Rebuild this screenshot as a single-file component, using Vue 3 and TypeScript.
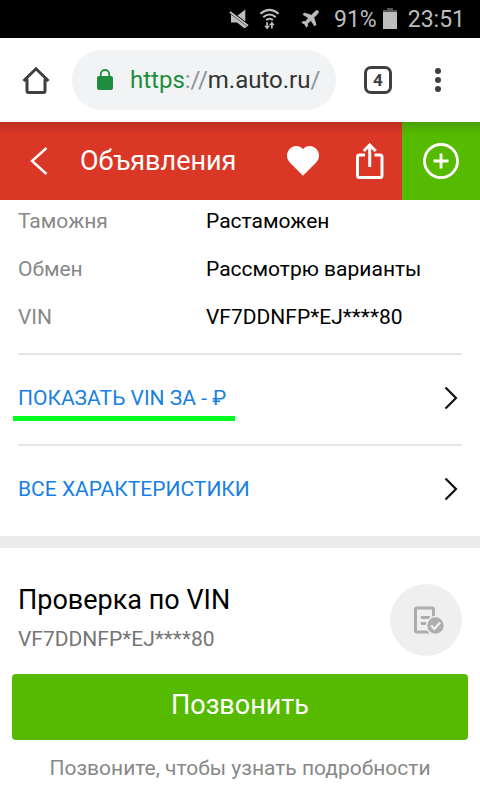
<script setup lang="ts">
interface Spec {
  label: string
  value: string
}

interface MoreLink {
  text: string
  marked: boolean
}

const vin = 'VF7DDNFP*EJ****80'

const specs: Spec[] = [
  { label: 'Таможня', value: 'Растаможен' },
  { label: 'Обмен', value: 'Рассмотрю варианты' },
  { label: 'VIN', value: vin },
]

const links: MoreLink[] = [
  { text: 'ПОКАЗАТЬ VIN ЗА - ₽', marked: true },
  { text: 'ВСЕ ХАРАКТЕРИСТИКИ', marked: false },
]
</script>

<template>
  <div class="screen">
    <div class="status">
      <svg width="20" height="20" viewBox="0 0 20 20" aria-hidden="true">
        <path d="M8.500 6.500L16.300 0.500V12.500z" fill="#bdbdbd" />
        <path d="M1 3L19 16.800" stroke="#bdbdbd" stroke-width="2" />
        <path d="M2 5.500L18 17.500l-1.700 1.500H15L8 13.500H2z" fill="#bdbdbd" />
      </svg>
      <svg class="wifi" width="21" height="22" viewBox="0 0 22 22" aria-hidden="true">
        <g fill="none" stroke="#bdbdbd" stroke-width="2.200">
          <path d="M1.500 5.500Q11 -2.500 20.500 5.500" />
          <path d="M4.500 9Q11 3.500 17.500 9" />
          <path d="M7.500 12.200Q11 9.300 14.500 12.200" />
          <path d="M8.500 14.500v5M13.500 21v-5" stroke-width="1.800" />
        </g>
        <path d="M5.500 18h6l-3 4zM10.500 17.500h6l-3-4z" fill="#bdbdbd" />
      </svg>
      <svg class="plane" width="18" height="18" viewBox="0 0 18 18" aria-hidden="true">
        <path
          d="M17 0.800C18 1.700 17 3.400 16 4.400L12.800 7.600 15 14.600 13.600 16 10 10.400 6.500 13.600 6.600 16 5.400 17.200 3.800 14.200 0.800 12.600 2 11.400 4.400 11.500 7.600 8 2 4.400 3.400 3 10.400 5.200 13.600 2C14.600 1 16.200 0 17 0.800z"
          fill="#bdbdbd"
          stroke="#bdbdbd"
          stroke-width="0.800"
        />
      </svg>
      <span class="charge">91%</span>
      <svg class="battery" width="14" height="22" viewBox="0 0 14 22" aria-hidden="true">
        <path d="M4 0h6v2h4v2H0V2h4z" fill="#555" />
        <path d="M0 4h14v17H0z" fill="#bdbdbd" />
      </svg>
      <time>23:51</time>
    </div>

    <nav class="browser">
      <button class="plain" type="button" aria-label="Домой">
        <svg width="28" height="28" viewBox="0 0 28 28" aria-hidden="true">
          <path
            d="M1.500 15L14 2.800 26.500 15M5 13v12q0 1.500 1.500 1.500h15q1.500 0 1.500-1.500V13"
            fill="none"
            stroke="#3c4043"
            stroke-width="3"
          />
        </svg>
      </button>
      <button class="address" type="button">
        <svg width="16" height="22" viewBox="0 0 16 22" aria-hidden="true">
          <path d="M3.800 8V5.200a4.200 4.200 0 0 1 8.400 0V8" fill="none" stroke="#1e8e3e" stroke-width="1.800" />
          <rect y="7" width="16" height="14" rx="2" fill="#1e8e3e" />
        </svg>
        <span class="url"><span class="secure">https</span><span class="dim">://</span>m.auto.ru<span class="dim">/</span></span>
      </button>
      <button class="tabs" type="button">4</button>
      <button class="plain more" type="button" aria-label="Меню">
        <svg width="6" height="24" viewBox="0 0 6 24" aria-hidden="true">
          <g fill="#3c4043">
            <circle cx="3" cy="3" r="3" />
            <circle cx="3" cy="12" r="3" />
            <circle cx="3" cy="21" r="3" />
          </g>
        </svg>
      </button>
    </nav>

    <header class="bar">
      <button class="plain" type="button" aria-label="Назад">
        <svg width="18" height="28" viewBox="0 0 18 28" aria-hidden="true">
          <path d="M16.500 1L2 14l14.500 13" fill="none" stroke="#fff" stroke-width="2.400" />
        </svg>
      </button>
      <h1>Объявления</h1>
      <button class="plain" type="button" aria-label="В избранное">
        <svg width="32" height="30" viewBox="0 0 32 30" aria-hidden="true">
          <path
            d="M16 29.800L2.800 16.500C-1 12.500-.8 6.500 2.600 3.000C6.200-.8 12.500-1 16 3.200C19.500-1 25.800-.8 29.400 3.000C32.800 6.500 33 12.500 29.200 16.500z"
            fill="#fff"
          />
        </svg>
      </button>
      <button class="plain share" type="button" aria-label="Поделиться">
        <svg width="28" height="36" viewBox="0 0 28 36" aria-hidden="true">
          <path
            d="M9 12H3.500q-2 0-2 2v18.500q0 2 2 2h20.500q2 0 2-2v-18.500q0-2-2-2H18.500M13.700 24V2.500M7.700 8l6-6 6 6"
            fill="none"
            stroke="#fff"
            stroke-width="3"
          />
        </svg>
      </button>
      <button class="add" type="button" aria-label="Добавить">
        <svg width="36" height="36" viewBox="0 0 36 36" aria-hidden="true">
          <g fill="none" stroke="#fff" stroke-width="2.800">
            <circle cx="18" cy="18" r="16.500" />
            <path d="M10.500 18h15M18 10.500v15" />
          </g>
        </svg>
      </button>
    </header>

    <main>
      <section class="details">
        <dl>
          <div v-for="s in specs" :key="s.label" class="spec">
            <dt>{{ s.label }}</dt>
            <dd>{{ s.value }}</dd>
          </div>
        </dl>
        <a v-for="l in links" :key="l.text" class="link" href="#">
          <span :class="{ marked: l.marked }">{{ l.text }}</span>
          <svg width="14" height="24" viewBox="0 0 14 24" aria-hidden="true">
            <path d="M1.500 1.500L12 12 1.500 22.500" fill="none" stroke="#111" stroke-width="2.200" />
          </svg>
        </a>
      </section>

      <section class="check">
        <div>
          <h2>Проверка по VIN</h2>
          <p>{{ vin }}</p>
        </div>
        <div class="badge">
          <svg width="32" height="30" viewBox="0 0 32 30" aria-hidden="true">
            <rect x="3.500" y="3" width="18" height="24" rx="1.500" fill="none" stroke="#adadad" stroke-width="3" />
            <path d="M10 12.500h7M10 18.500h4" stroke="#adadad" stroke-width="2.800" stroke-linecap="round" />
            <circle cx="23.500" cy="20.500" r="9" fill="#adadad" stroke="#efefef" stroke-width="1.500" />
            <path d="M19.200 20.500l3.200 3.500 5.700-6.500" fill="none" stroke="#efefef" stroke-width="2.400" />
          </svg>
        </div>
      </section>
    </main>

    <footer>
      <button class="call" type="button">Позвонить</button>
      <p>Позвоните, чтобы узнать подробности</p>
    </footer>
  </div>
</template>

<style>
body {
  background: #fff;
}
</style>

<style scoped>
.screen {
  font-family: Roboto, 'Noto Sans', sans-serif;
  font-size: 21px;
  line-height: 24px;
  color: #000;
}
button {
  border: 0;
  padding: 0;
  font: inherit;
  cursor: pointer;
}
h1,
h2,
p,
dl,
dd {
  margin: 0;
  font-weight: 400;
}
svg {
  display: block;
  flex: none;
}
.plain {
  background: none;
}
.status {
  display: flex;
  align-items: center;
  justify-content: flex-end;
  height: 38px;
  padding-right: 15px;
  background: #000;
  color: #bdbdbd;
  font-size: 23px;
}
.wifi {
  margin-left: 10px;
}
.plane {
  margin-left: 21px;
}
.charge {
  margin-left: 15px;
}
.battery {
  margin: 0 11px 0 6px;
}
.status span,
.status time {
  padding-top: 2px;
}
.browser {
  display: flex;
  align-items: center;
  height: 84px;
  padding: 0 39px 0 22px;
}
.address {
  display: flex;
  align-items: center;
  flex: 1;
  height: 60px;
  margin: 0 28px 0 22px;
  padding-left: 25px;
  border-radius: 30px;
  background: #f1f3f4;
  color: #333;
  font-size: 24px;
}
.url {
  margin-left: 17px;
}
.secure {
  color: #1e8e3e;
}
.dim {
  color: #8f9193;
}
.tabs {
  width: 28px;
  height: 28px;
  border: 3px solid #3c4043;
  border-radius: 7px;
  background: none;
  color: #3c4043;
  font-size: 17px;
  font-weight: 700;
  line-height: 22px;
}
.more {
  margin-left: 43px;
}
.bar {
  display: flex;
  align-items: center;
  height: 78px;
  padding-left: 30px;
  background: linear-gradient(rgba(0, 0, 0, 0.15), transparent 12px) #db3727;
  color: #fff;
}
h1 {
  flex: 1;
  margin-left: 32px;
  font-size: 27px;
  line-height: 32px;
}
.share {
  margin: 0 18px 0 37px;
}
.add {
  display: grid;
  place-items: center;
  width: 78px;
  height: 78px;
  background: linear-gradient(rgba(0, 0, 0, 0.15), transparent 12px) #56bb00;
}
.details {
  padding: 9px 18px 1px;
}
dl {
  display: grid;
  gap: 24px;
  padding-bottom: 24px;
}
.spec {
  display: grid;
  grid-template-columns: 188px 1fr;
}
dt {
  color: #888;
}
.link {
  display: flex;
  align-items: center;
  justify-content: space-between;
  box-sizing: border-box;
  height: 91px;
  padding: 0 4px 3px 0;
  border-top: 2px solid #e6e6e6;
  color: #187fe3;
  text-decoration: none;
}
.marked {
  position: relative;
}
.marked::after {
  content: '';
  position: absolute;
  right: -9px;
  bottom: -11px;
  left: -5px;
  height: 5px;
  background: #00ff21;
}
.check {
  display: flex;
  justify-content: space-between;
  padding: 36px 18px 18px;
  border-top: 12px solid #ececec;
}
h2 {
  font-size: 27px;
  line-height: 32px;
}
.check p {
  margin-top: 11px;
  color: #757575;
}
.badge {
  display: grid;
  place-items: center;
  width: 72px;
  height: 72px;
  padding-left: 3px;
  box-sizing: border-box;
  border-radius: 50%;
  background: #efefef;
}
footer {
  padding: 0 12px 20px;
  text-align: center;
  color: #888;
}
.call {
  display: block;
  width: 100%;
  height: 66px;
  margin-bottom: 16px;
  padding-bottom: 4px;
  border-radius: 4px;
  background: #56bb00;
  color: #fff;
  font-size: 27px;
}
</style>
